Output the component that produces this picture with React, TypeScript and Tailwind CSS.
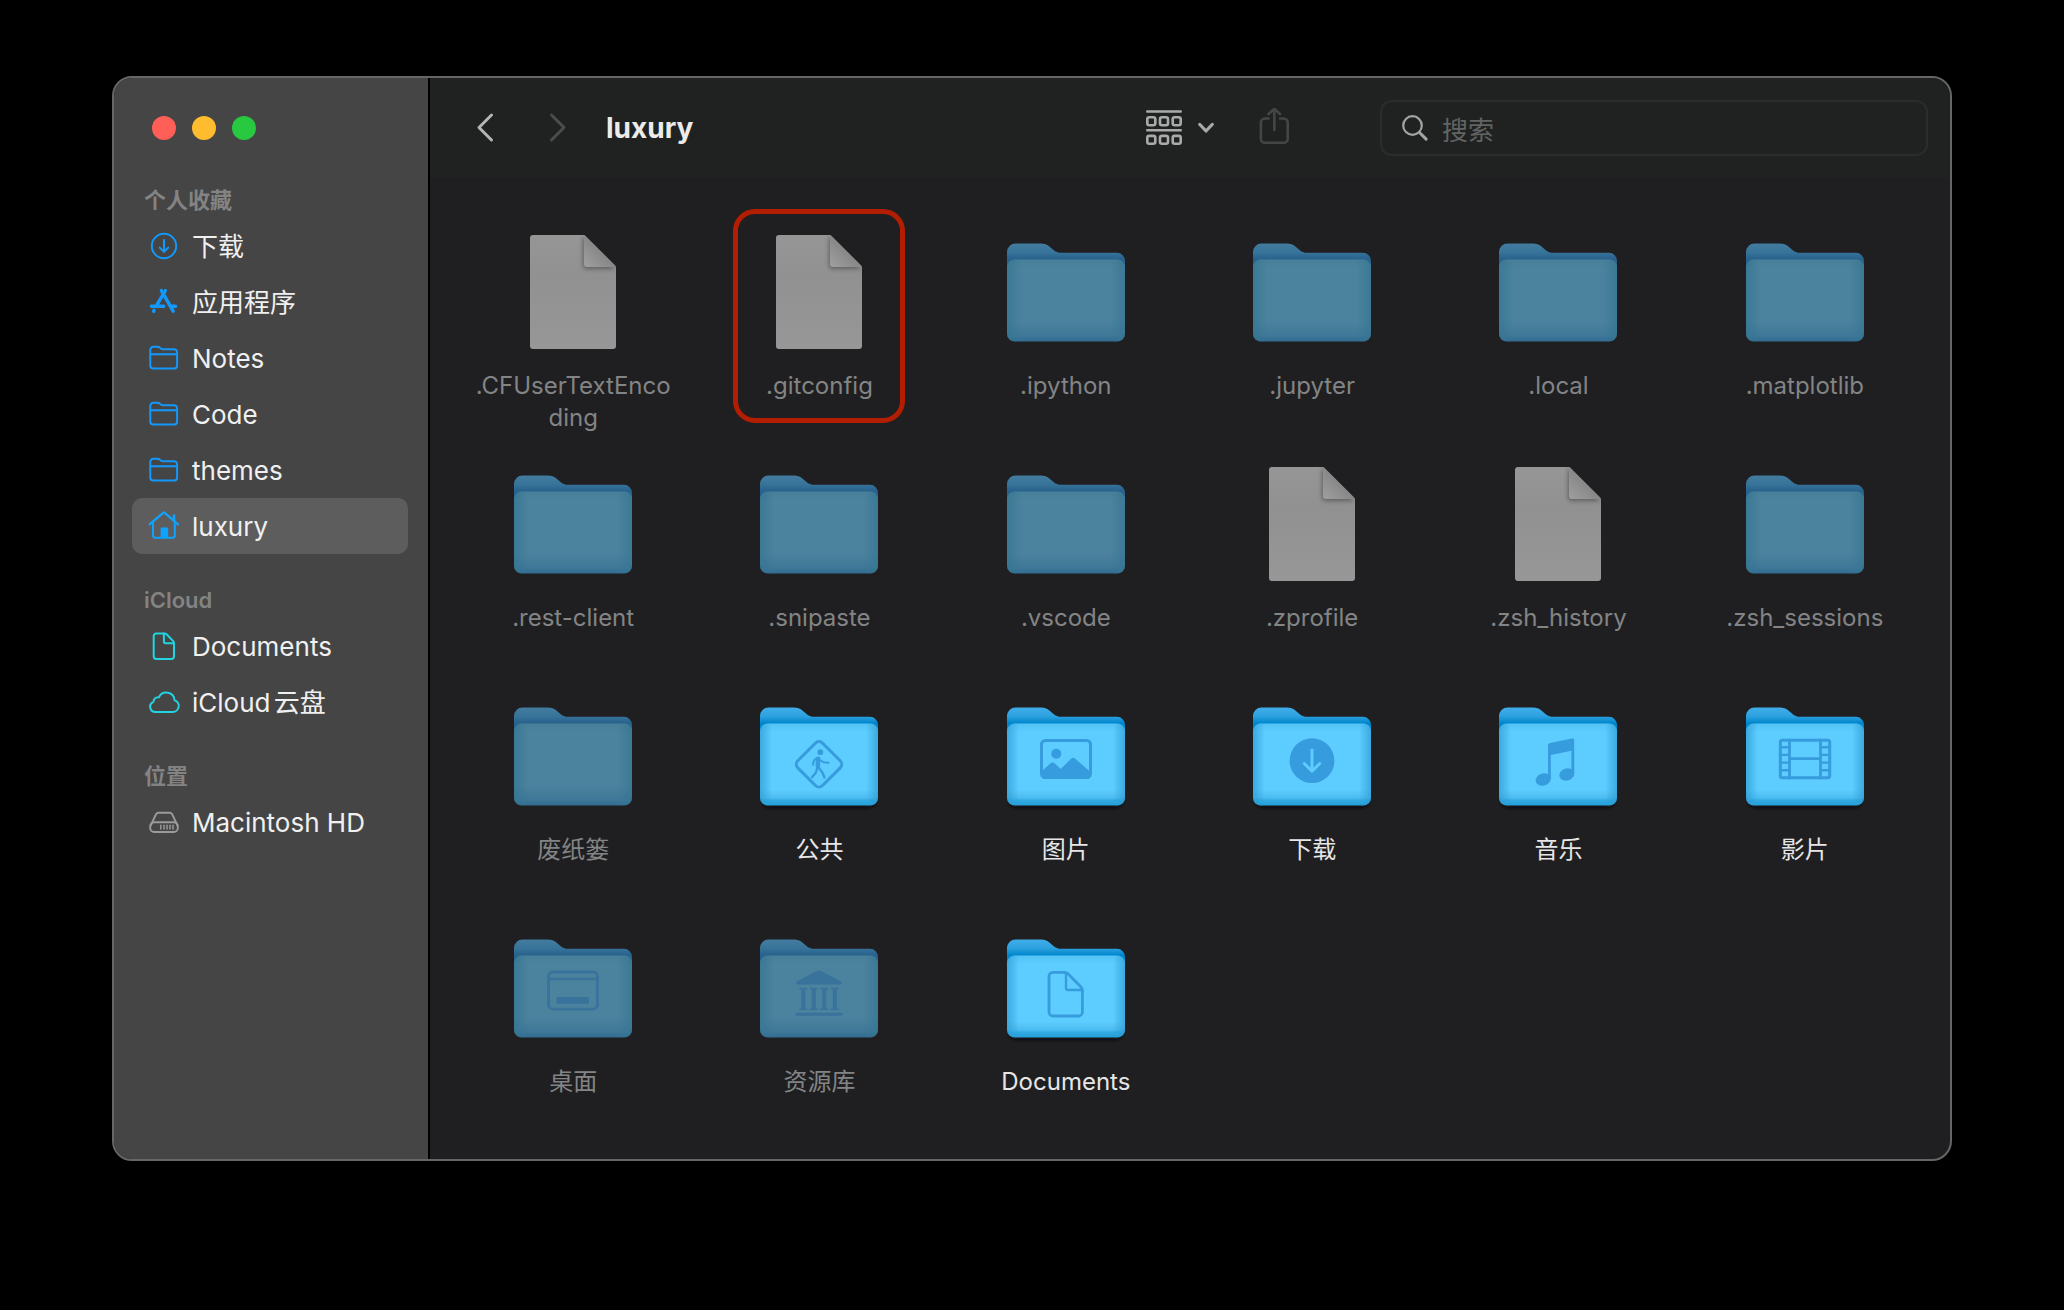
import type { ReactNode } from "react";

/* ---------- Sidebar icons (32 × 32) ---------- */

function SideIcon({ children, className }: { children: ReactNode; className: string }) {
  return (
    <svg
      viewBox="0 0 32 32"
      aria-hidden="true"
      className={`size-8 shrink-0 ${className}`}
      fill="none"
      stroke="currentColor"
      strokeWidth="2"
      strokeLinecap="round"
      strokeLinejoin="round"
    >
      {children}
    </svg>
  );
}

const BLUE = "text-[#1398fb]";
const CYAN = "text-[#22d3e0]";
const GREY = "text-[#9a9a9a]";

const DownloadSide = () => (
  <SideIcon className={BLUE}>
    <circle cx="16" cy="16" r="12.2" />
    <path d="M16 10v11.6M11.7 17.6l4.3 4.3 4.3-4.3" />
  </SideIcon>
);

const AppsSide = () => (
  <SideIcon className={BLUE}>
    <g strokeWidth="3.4">
      <path d="M13.400 4.600l11.800 20.600" />
      <path d="M17.400 4.600L8.200 20.200" />
      <path d="M5.600 25.300l.5-.9" />
      <path d="M3.400 20.200h12.400M23.400 20.200h4.200" />
    </g>
  </SideIcon>
);

const FolderSide = () => (
  <SideIcon className={BLUE}>
    <path d="M2.300 11.600V7.800a3 3 0 0 1 3-3h4.400c1 0 1.600.3 2.300.9l1 .8c.6.5 1.100.7 1.900.7h11.200a3 3 0 0 1 3 3v13.400a3 3 0 0 1-3 3H5.300a3 3 0 0 1-3-3V12.200h26.600" />
  </SideIcon>
);

const HomeSide = () => (
  <SideIcon className="text-[#0fa3ff]">
    <path d="M1.600 14.400L15.200 2.800c.5-.4 1.100-.4 1.600 0L30 14.400" strokeWidth="2.200" />
    <path d="M5 13v12.300c0 1.600.8 2.500 2.500 2.500h16.800c1.700 0 2.500-.9 2.500-2.500V13" />
    <path d="M26 10.500V5.500" strokeWidth="2.600" />
    <path d="M13.400 27.500v-9.200h6v9.200z" fill="currentColor" strokeWidth="1.600" />
  </SideIcon>
);

const DocSide = () => (
  <SideIcon className={CYAN}>
    <path d="M8.300 3.400h8.200c.9 0 1.500.2 2.100.9l6.600 6.800c.6.6.8 1.200.8 2.100v13.100a2.600 2.600 0 0 1-2.600 2.600H8.300a2.600 2.600 0 0 1-2.600-2.600V6a2.600 2.600 0 0 1 2.600-2.600z" />
    <path d="M15.900 3.600v8c0 1.100.5 1.600 1.600 1.600h8.200" />
  </SideIcon>
);

const CloudSide = () => (
  <SideIcon className={CYAN}>
    <path d="M7.500 26h17.200a6 6 0 0 0 1.900-11.700 8.300 8.300 0 0 0-15.700-3.100 5.100 5.100 0 0 0-5.500 4.600A5.300 5.300 0 0 0 7.500 26z" />
  </SideIcon>
);

const DiskSide = () => (
  <SideIcon className={GREY}>
    <path d="M2.700 19.500l5.200-11c.6-1.200 1.400-1.700 2.700-1.700h11c1.300 0 2.100.5 2.700 1.700l5.200 11" strokeWidth="1.900" />
    <rect x="2.200" y="16.200" width="27.600" height="9.800" rx="4" strokeWidth="1.900" />
    <path d="M12.800 19.300v3.600M16 19.300v3.600M19 19.300v3.600M22 19.300v3.600M25 19.300v3.600" strokeWidth="1.500" />
  </SideIcon>
);

/* ---------- Sidebar ---------- */

type Place = { name: string; icon: ReactNode; active?: boolean };

const sections: { title: string; places: Place[] }[] = [
  {
    title: "个人收藏",
    places: [
      { name: "下载", icon: <DownloadSide /> },
      { name: "应用程序", icon: <AppsSide /> },
      { name: "Notes", icon: <FolderSide /> },
      { name: "Code", icon: <FolderSide /> },
      { name: "themes", icon: <FolderSide /> },
      { name: "luxury", icon: <HomeSide />, active: true },
    ],
  },
  {
    title: "iCloud",
    places: [
      { name: "Documents", icon: <DocSide /> },
      { name: "iCloud云盘", icon: <CloudSide /> },
    ],
  },
  { title: "位置", places: [{ name: "Macintosh HD", icon: <DiskSide /> }] },
];

function Sidebar() {
  return (
    <aside className="w-[316px] shrink-0 border-r-2 border-black bg-[#454545] pr-5 pl-[18px]">
      <div className="mb-1 flex h-[100px] items-center gap-4 pl-5">
        <button type="button" aria-label="关闭" className="size-6 rounded-full bg-[#ff5f57]" />
        <button type="button" aria-label="最小化" className="size-6 rounded-full bg-[#febc2e]" />
        <button type="button" aria-label="缩放" className="size-6 rounded-full bg-[#28c840]" />
      </div>
      <nav className="flex flex-col gap-7">
        {sections.map((section) => (
          <section key={section.title}>
            <h2 className="pl-3 text-[22px] leading-9 font-semibold text-[#838383]">{section.title}</h2>
            <ul>
              {section.places.map((place) => (
                <li key={place.name}>
                  <a
                    href="#"
                    aria-current={place.active ? "page" : undefined}
                    className={`flex h-14 items-center gap-3 rounded-[10px] pl-4 text-[26px] whitespace-nowrap text-[#f0f0f0] [text-autospace:normal] ${
                      place.active ? "bg-[#5d5d5d]" : ""
                    }`}
                  >
                    {place.icon}
                    {place.name}
                  </a>
                </li>
              ))}
            </ul>
          </section>
        ))}
      </nav>
    </aside>
  );
}

/* ---------- Toolbar ---------- */

function Toolbar() {
  return (
    <header className="flex h-[100px] items-center bg-[#202221] pr-[22px] pl-9">
      <button type="button" aria-label="后退" className="flex size-9 items-center justify-center text-[#b4b5b4]">
        <svg viewBox="0 0 36 36" className="size-9" fill="none" stroke="currentColor" strokeWidth="3" strokeLinecap="round" strokeLinejoin="round">
          <path d="M25.500 5L13 17.500 25.500 30" />
        </svg>
      </button>
      <button type="button" aria-label="前进" disabled className="ml-9 flex size-9 items-center justify-center text-[#4b4c4b]">
        <svg viewBox="0 0 36 36" className="size-9" fill="none" stroke="currentColor" strokeWidth="3" strokeLinecap="round" strokeLinejoin="round">
          <path d="M13.500 5L26 17.500 13.500 30" />
        </svg>
      </button>
      <h1 className="ml-8 text-[28px] leading-9 font-bold text-[#ebebeb]">luxury</h1>
      <button type="button" aria-label="显示方式" className="ml-auto flex items-center gap-4 text-[#a9aaa9]">
        <svg viewBox="0 0 36 36" className="size-9" fill="none" stroke="currentColor" strokeWidth="2.600" strokeLinecap="round">
          <path d="M1.300 1.500h33.400M1.300 20.200h33.400" />
          <rect x="1.300" y="7.300" width="8" height="8" rx="2" />
          <rect x="14" y="7.300" width="8" height="8" rx="2" />
          <rect x="26.700" y="7.300" width="8" height="8" rx="2" />
          <rect x="1.300" y="25.900" width="8" height="7.800" rx="2" />
          <rect x="14" y="25.900" width="8" height="7.800" rx="2" />
          <rect x="26.700" y="25.900" width="8" height="7.800" rx="2" />
        </svg>
        <svg viewBox="0 0 16 12" className="h-3 w-4" fill="none" stroke="currentColor" strokeWidth="3.200" strokeLinecap="round" strokeLinejoin="round">
          <path d="M1.800 2.500L8 9l6.200-6.500" />
        </svg>
      </button>
      <button type="button" aria-label="共享" disabled className="ml-[42px] text-[#444645]">
        <svg viewBox="0 0 36 40" className="h-10 w-9" fill="none" stroke="currentColor" strokeWidth="2.600" strokeLinecap="round" strokeLinejoin="round">
          <path d="M12.600 10.500H8.900a4 4 0 0 0-4 4v16.300a4 4 0 0 0 4 4h18.800a4 4 0 0 0 4-4V14.500a4 4 0 0 0-4-4h-3.700" />
          <path d="M18.300 22V.9M12.600 6l5.700-5.300L24 6" />
        </svg>
      </button>
      <label className="ml-[88px] flex h-14 w-[548px] items-center gap-[14px] rounded-xl border-2 border-[#2b2d2c] pl-5">
        <svg viewBox="0 0 26 26" className="size-[26px] shrink-0" fill="none" stroke="#a3a4a3" strokeLinecap="round">
          <circle cx="10.500" cy="10.500" r="9.300" strokeWidth="2.200" />
          <path d="M17.500 17.500l6.600 6.600" strokeWidth="3" />
        </svg>
        <input
          type="search"
          aria-label="搜索"
          placeholder="搜索"
          className="w-full min-w-0 bg-transparent pt-1 text-[26px] text-[#ebebeb] outline-none placeholder:text-[#626463]"
        />
      </label>
    </header>
  );
}

/* ---------- Item artwork (128 × 128) ---------- */

function ArtDefs() {
  return (
    <svg aria-hidden="true" className="absolute size-0">
      <defs>
        <linearGradient id="back" x1="0" y1="15" x2="0" y2="33" gradientUnits="userSpaceOnUse">
          <stop offset="0" stopColor="#41aeea" />
          <stop offset="0.5" stopColor="#2ea2e0" />
          <stop offset="0.9" stopColor="#0086cc" />
        </linearGradient>
        <linearGradient id="backDim" x1="0" y1="15" x2="0" y2="33" gradientUnits="userSpaceOnUse">
          <stop offset="0" stopColor="#437c9f" />
          <stop offset="0.5" stopColor="#38749a" />
          <stop offset="0.9" stopColor="#28628d" />
        </linearGradient>
        <linearGradient id="front" x1="0" y1="32" x2="0" y2="114" gradientUnits="userSpaceOnUse">
          <stop offset="0" stopColor="#54c4f7" />
          <stop offset="0.1" stopColor="#5dccff" />
          <stop offset="0.8" stopColor="#5dccff" />
          <stop offset="0.9" stopColor="#4dbcf0" />
          <stop offset="0.93" stopColor="#32aae2" />
          <stop offset="1" stopColor="#249fd8" />
        </linearGradient>
        <linearGradient id="frontDim" x1="0" y1="32" x2="0" y2="114" gradientUnits="userSpaceOnUse">
          <stop offset="0" stopColor="#487f99" />
          <stop offset="0.1" stopColor="#4b829e" />
          <stop offset="0.75" stopColor="#4b829e" />
          <stop offset="0.92" stopColor="#3f7899" />
          <stop offset="1" stopColor="#306a90" />
        </linearGradient>
        <linearGradient id="edge" x1="5" y1="0" x2="123" y2="0" gradientUnits="userSpaceOnUse">
          <stop offset="0" stopColor="#2a9bd2" stopOpacity="0.7" />
          <stop offset="0.1" stopColor="#2a9bd2" stopOpacity="0" />
          <stop offset="0.9" stopColor="#2a9bd2" stopOpacity="0" />
          <stop offset="1" stopColor="#2a9bd2" stopOpacity="0.7" />
        </linearGradient>
        <linearGradient id="edgeDim" x1="5" y1="0" x2="123" y2="0" gradientUnits="userSpaceOnUse">
          <stop offset="0" stopColor="#347590" stopOpacity="0.7" />
          <stop offset="0.12" stopColor="#347590" stopOpacity="0" />
          <stop offset="0.88" stopColor="#347590" stopOpacity="0" />
          <stop offset="1" stopColor="#347590" stopOpacity="0.7" />
        </linearGradient>
        <linearGradient id="page" x1="0" y1="0" x2="0" y2="1">
          <stop offset="0" stopColor="#969696" />
          <stop offset="0.35" stopColor="#919191" />
          <stop offset="1" stopColor="#979797" />
        </linearGradient>
        <linearGradient id="fold" x1="75" y1="39" x2="92" y2="22" gradientUnits="userSpaceOnUse">
          <stop offset="0" stopColor="#a0a0a0" />
          <stop offset="1" stopColor="#868686" />
        </linearGradient>
        <filter id="soft" x="-30%" y="-30%" width="160%" height="160%">
          <feGaussianBlur stdDeviation="2" />
        </filter>
        <clipPath id="pageClip">
          <path d="M24 7H73.500c1.500 0 2.500.4 3.500 1.400L105.600 37c1 1 1.400 2 1.400 3.500V118a3 3 0 0 1-3 3H24a3 3 0 0 1-3-3V10a3 3 0 0 1 3-3z" />
        </clipPath>
      </defs>
    </svg>
  );
}

function FileArt() {
  return (
    <svg viewBox="0 0 128 128" aria-hidden="true" className="size-32">
      <g clipPath="url(#pageClip)">
        <rect x="21" y="7" width="86" height="114" fill="url(#page)" />
        <path d="M74 8v29a4 4 0 0 0 4 4h28" fill="#565656" filter="url(#soft)" opacity="0.85" />
        <path d="M75 6v30a3 3 0 0 0 3 3h30z" fill="url(#fold)" />
      </g>
    </svg>
  );
}

const glyphs = {
  public: (
    <>
      <rect x="46.500" y="54.800" width="35" height="35" rx="5" transform="rotate(45 64 72.300)" strokeWidth="3" />
      <circle cx="65.300" cy="60.200" r="2.900" fill="currentColor" stroke="none" />
      <path d="M63.200 66.800l-.4 7.200" strokeWidth="4.600" />
      <path d="M62 66.200c-2.600 1-3.900 3-4 6.500M66 68.500l2.500 1.800 5 .4" strokeWidth="2" />
      <path d="M62 76.500l-1 4-4 4.800M64 76l3.400 4.500 2 5" strokeWidth="2.400" />
    </>
  ),
  pictures: (
    <>
      <rect x="39.500" y="48.500" width="49" height="37" rx="4" strokeWidth="3" />
      <circle cx="54.300" cy="61.800" r="5" fill="currentColor" stroke="none" />
      <path d="M39.500 79.500l9-8.200c1.400-1.200 2.600-1.200 4 0l6.200 5.600 10.200-10c1.600-1.500 3-1.500 4.600 0l15 13.100v3a4 4 0 0 1-4 4h-41a4 4 0 0 1-4-4z" fill="currentColor" stroke="none" />
    </>
  ),
  downloads: (
    <>
      <circle cx="64" cy="68.700" r="22.400" fill="currentColor" stroke="none" />
      <path d="M64 58v21M56.300 71.500L64 79.200l7.700-7.700" stroke="#5dccff" strokeWidth="3" />
    </>
  ),
  music: (
    <g fill="currentColor" stroke="none">
      <path d="M54 53.300c0-1.300.7-2.100 2-2.400l22-4.300c1.400-.3 2.200.3 2.200 1.600v33.600h-2.800V58.800L56.800 63v23.800H54z" />
      <ellipse cx="49.300" cy="87.500" rx="7.800" ry="6" transform="rotate(-18 49.300 87.500)" />
      <ellipse cx="72.800" cy="82.500" rx="7.600" ry="6" transform="rotate(-18 72.800 82.500)" />
    </g>
  ),
  movies: (
    <>
      <rect x="39.300" y="48.300" width="49.400" height="37.400" rx="2" strokeWidth="3" />
      <path d="M48.500 48v38M79.500 48v38M48.500 66.700h31" strokeWidth="2.800" />
      <path d="M40 55.200h8M40 62.900h8M40 70.600h8M40 78.300h8M80 55.200h8M80 62.900h8M80 70.600h8M80 78.300h8" strokeWidth="2.400" strokeLinecap="butt" />
    </>
  ),
  desktop: (
    <>
      <rect x="39.600" y="48" width="48.800" height="37.200" rx="4.500" strokeWidth="2.800" />
      <path d="M40 55h48" strokeWidth="2.400" />
      <rect x="47.500" y="73" width="32.500" height="7" rx="1" fill="currentColor" stroke="none" />
    </>
  ),
  library: (
    <g fill="currentColor" stroke="none">
      <path d="M62.300 46.800c1.100-.6 2.300-.6 3.400 0L86 57.600c.8.500 1.100 2.800 0 2.800H42c-1.100 0-.8-2.300 0-2.800z" />
      <path d="M44.500 63.800h7.600v1.600h-1.800v19h2.200V86h-8.400v-1.600h2.200v-19h-1.800zM55 63.800h7.600v1.600h-1.800v19H63V86h-8.400v-1.600h2.200v-19H55zM65.500 63.800h7.600v1.600h-1.800v19h2.200V86h-8.400v-1.600h2.200v-19h-1.800zM76 63.800h7.600v1.600h-1.800v19H84V86h-8.400v-1.600h2.200v-19H76z" />
      <rect x="40.500" y="88.700" width="47" height="3" rx="1.500" />
    </g>
  ),
  documents: (
    <>
      <path d="M51 48.300h11.500c1.500 0 2.500.4 3.500 1.400L79 63c1 1 1.400 2 1.400 3.500V88a4 4 0 0 1-4 4H51a4 4 0 0 1-4-4V52.300a4 4 0 0 1 4-4z" strokeWidth="2.800" />
      <path d="M64 49v14.800c0 1.400.8 2.200 2.200 2.200H80" strokeWidth="2.400" />
    </>
  ),
};

type Glyph = keyof typeof glyphs;

function FolderArt({ dim, glyph }: { dim?: boolean; glyph?: Glyph }) {
  return (
    <svg viewBox="0 0 128 128" aria-hidden="true" className="size-32">
      {!dim && <rect x="8" y="106" width="112" height="9.500" rx="7" fill="#0b0c10" filter="url(#soft)" />}
      <path
        d="M5 60V24a8.500 8.500 0 0 1 8.500-8.500h25.500c3.500 0 5.700.8 8.400 3l3.800 3.200c2.600 2.200 4.800 3.100 8.200 3.100H115a8 8 0 0 1 8 8V60z"
        fill={dim ? "url(#backDim)" : "url(#back)"}
      />
      <rect x="5" y="31.500" width="118" height="82" rx="8" fill={dim ? "url(#frontDim)" : "url(#front)"} />
      <rect x="5" y="31.500" width="118" height="82" rx="8" fill={dim ? "url(#edgeDim)" : "url(#edge)"} />
      {glyph && (
        <g
          className={dim ? "text-[#39739b]" : "text-[#369cdd]"}
          fill="none"
          stroke="currentColor"
          strokeLinecap="round"
          strokeLinejoin="round"
        >
          {glyphs[glyph]}
        </g>
      )}
    </svg>
  );
}

/* ---------- Grid ---------- */

type Item = { name: string; file?: boolean; dim?: boolean; glyph?: Glyph; marked?: boolean };

const items: Item[] = [
  { name: ".CFUserTextEncoding", file: true, dim: true },
  { name: ".gitconfig", file: true, dim: true, marked: true },
  { name: ".ipython", dim: true },
  { name: ".jupyter", dim: true },
  { name: ".local", dim: true },
  { name: ".matplotlib", dim: true },
  { name: ".rest-client", dim: true },
  { name: ".snipaste", dim: true },
  { name: ".vscode", dim: true },
  { name: ".zprofile", file: true, dim: true },
  { name: ".zsh_history", file: true, dim: true },
  { name: ".zsh_sessions", dim: true },
  { name: "废纸篓", dim: true },
  { name: "公共", glyph: "public" },
  { name: "图片", glyph: "pictures" },
  { name: "下载", glyph: "downloads" },
  { name: "音乐", glyph: "music" },
  { name: "影片", glyph: "movies" },
  { name: "桌面", dim: true, glyph: "desktop" },
  { name: "资源库", dim: true, glyph: "library" },
  { name: "Documents", glyph: "documents" },
];

function GridItem({ item }: { item: Item }) {
  return (
    <li className="relative flex min-h-[232px] justify-center">
      {item.marked && (
        <span
          aria-hidden="true"
          className="pointer-events-none absolute top-0 left-1/2 h-[214px] w-[172px] -translate-x-1/2 rounded-[22px] border-[5px] border-[#b31e02]"
        />
      )}
      <button type="button" className="flex w-[200px] flex-col items-center gap-[14px] pt-[19px]">
        {item.file ? <FileArt /> : <FolderArt dim={item.dim} glyph={item.glyph} />}
        <span
          className={`max-w-full text-center text-2xl leading-8 break-all ${
            item.dim ? "text-[#838485]" : "text-[#e6e6e7]"
          }`}
        >
          {item.name}
        </span>
      </button>
    </li>
  );
}

export default function App() {
  return (
    <div className="min-h-screen bg-black px-28 pt-[76px] pb-16 font-['Inter','Noto_Sans_CJK_SC',sans-serif]">
      <ArtDefs />
      <div className="flex overflow-hidden rounded-[20px] border-2 border-[#666667] bg-[#1f1f21]">
        <Sidebar />
        <main className="min-w-0 flex-1">
          <Toolbar />
          <ul className="grid grid-cols-6 pt-[31px] pr-[22px] pb-[22px] pl-5">
            {items.map((item) => (
              <GridItem key={item.name} item={item} />
            ))}
          </ul>
        </main>
      </div>
    </div>
  );
}
